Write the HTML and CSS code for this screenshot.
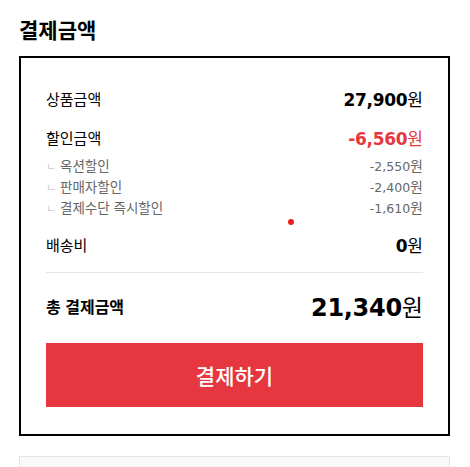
FILE: index.html
```html
<!DOCTYPE html>
<html lang="ko">
<head>
  <meta charset="UTF-8">
  <title>결제금액</title>
  <meta name="viewport" content="width=device-width, initial-scale=1.0">
  <link rel="stylesheet" href="styles.css">
</head>
<body>
  <div class="page">
    <h2 class="title">결제금액</h2>

    <div class="summary">
      <div class="row">
        <span class="label">상품금액</span>
        <span class="amount">27,900<span class="won">원</span></span>
      </div>

      <div class="row row-discount">
        <span class="label">할인금액</span>
        <span class="amount discount">-6,560<span class="won">원</span></span>
      </div>

      <ul class="sub-list">
        <li class="sub-item">
          <span class="sub-label"><span class="mark">ㄴ</span>옥션할인</span>
          <span class="sub-amount">-2,550<span class="won">원</span></span>
        </li>
        <li class="sub-item">
          <span class="sub-label"><span class="mark">ㄴ</span>판매자할인</span>
          <span class="sub-amount">-2,400<span class="won">원</span></span>
        </li>
        <li class="sub-item">
          <span class="sub-label"><span class="mark">ㄴ</span>결제수단 즉시할인</span>
          <span class="sub-amount">-1,610<span class="won">원</span></span>
        </li>
      </ul>

      <div class="row row-delivery">
        <span class="label">배송비</span>
        <span class="amount">0<span class="won">원</span></span>
      </div>

      <div class="total">
        <span class="total-label">총 결제금액</span>
        <span class="total-amount">21,340<span class="won">원</span></span>
      </div>

      <button type="button" class="pay-btn">결제하기</button>
    </div>

    <div class="next-box"></div>
  </div>

  <span class="dot"></span>
</body>
</html>
```

FILE: styles.css
```css
:root {
  --red: #e63740;
  --text: #000;
  --sub: #666;
  --line: #e5e5e5;
  --kr: "Noto Sans CJK KR", "Noto Sans", sans-serif;
  --num: "DejaVu Sans", "Noto Sans CJK KR", sans-serif;
}

* {
  box-sizing: border-box;
}

body {
  margin: 0;
  background: #fff;
  color: var(--text);
  font-family: var(--kr);
  overflow: hidden;
}

.page {
  padding: 16px 20px 0 19px;
}

.title {
  margin: 0 0 14px;
  font-size: 21px;
  line-height: 26px;
  font-weight: bold;
}

.summary {
  border: 2px solid #000;
  padding: 28px 25px 27px;
}

.row {
  display: flex;
  justify-content: space-between;
  align-items: center;
  height: 24px;
}

.row-discount {
  margin-top: 15px;
}

.row-delivery {
  margin-top: 14px;
}

.label {
  font-size: 15px;
}

.amount {
  font-family: var(--num);
  font-size: 17px;
  font-weight: bold;
  letter-spacing: -0.3px;
}

.amount.discount {
  color: var(--red);
}

.won {
  font-family: var(--kr);
  font-weight: normal;
  letter-spacing: 0;
}

.sub-list {
  list-style: none;
  margin: 6px 0 0;
  padding: 0;
}

.sub-item {
  display: flex;
  justify-content: space-between;
  align-items: center;
  height: 21px;
  font-size: 13.5px;
  color: var(--sub);
}

.mark {
  display: inline-block;
  width: 14px;
  font-size: 11px;
  color: #ccc;
}

.sub-amount {
  font-family: var(--num);
  font-size: 12.5px;
}

.sub-amount .won {
  font-size: 14px;
}

.sub-amount,
.sub-label {
  line-height: 21px;
}

.total {
  display: flex;
  justify-content: space-between;
  align-items: center;
  height: 30px;
  margin-top: 16px;
  border-top: 1px solid var(--line);
  box-sizing: content-box;
  padding-top: 18px;
}

.total-label {
  font-size: 16px;
  font-weight: bold;
}

.total-amount {
  font-family: var(--num);
  font-size: 24px;
  font-weight: bold;
  letter-spacing: -0.3px;
}

.total-amount .won {
  font-size: 23px;
}

.pay-btn {
  display: block;
  width: 100%;
  height: 64px;
  margin-top: 22px;
  border: none;
  background: var(--red);
  color: #fff;
  font-family: var(--kr);
  font-size: 21px;
  font-weight: 500;
  cursor: pointer;
}

.next-box {
  height: 60px;
  margin-top: 20px;
  border: 1px solid var(--line);
  background: #f9f9f9;
}

.dot {
  position: absolute;
  left: 288px;
  top: 219px;
  width: 6px;
  height: 6px;
  border-radius: 50%;
  background: #e8201f;
}
```
